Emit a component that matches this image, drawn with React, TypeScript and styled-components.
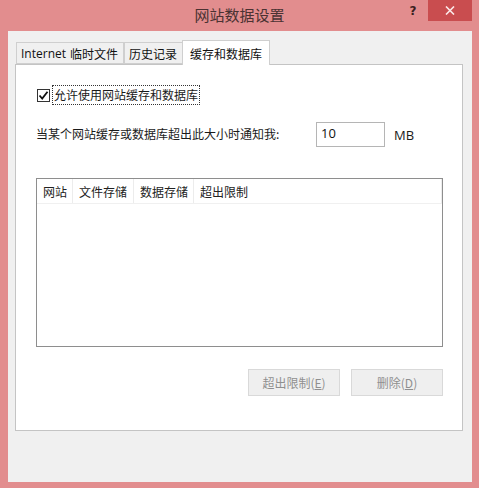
import React, { useState } from 'react';
import styled, { createGlobalStyle } from 'styled-components';

const GlobalStyle = createGlobalStyle`
  html, body {
    margin: 0;
    padding: 0;
    background: #e28d8e;
  }
  body {
    font-family: 'Noto Sans CJK SC', 'Liberation Sans', sans-serif;
    font-size: 12px;
    color: #1a1a1a;
  }
`;

const Window = styled.div`
  width: 479px;
  height: 488px;
  background: #e28d8e;
  display: flex;
  flex-direction: column;
  box-sizing: border-box;
  padding-bottom: 6px;
`;

const TitleBar = styled.div`
  height: 31px;
  display: grid;
  grid-template-columns: 1fr auto 1fr;
  align-items: start;
  flex-shrink: 0;
`;

const Caption = styled.div`
  grid-column: 2;
  font-size: 15px;
  line-height: 30px;
  color: #4a3232;
`;

const Controls = styled.div`
  grid-column: 3;
  justify-self: end;
  display: flex;
  align-items: center;
  margin-right: 7px;
`;

const HelpButton = styled.div`
  width: 22px;
  height: 20px;
  font-family: 'DejaVu Sans', sans-serif;
  font-weight: bold;
  font-size: 12px;
  color: #3a2020;
  display: flex;
  align-items: center;
  justify-content: center;
  margin-right: 4px;
`;

const CloseButton = styled.div`
  width: 44px;
  height: 21px;
  background: #c94d4f;
  display: flex;
  align-items: center;
  justify-content: center;
`;

const Client = styled.div`
  flex: 1;
  margin: 0 7px 0 8px;
  background: #f0f0f0;
  padding: 9px 9px 0 7px;
  display: flex;
  flex-direction: column;
`;

const TabStrip = styled.div`
  display: flex;
  align-items: flex-end;
  height: 24px;
  padding-left: 1px;
  position: relative;
  z-index: 1;
`;

const Tab = styled.div<{ $active?: boolean }>`
  height: ${p => (p.$active ? 25 : 22)}px;
  margin-bottom: ${p => (p.$active ? -1 : 0)}px;
  box-sizing: border-box;
  padding: 0 ${p => (p.$active ? 7 : 5)}px 0 ${p => (p.$active ? 7 : 4)}px;
  background: ${p => (p.$active ? '#ffffff' : '#f0f0f0')};
  border: 1px solid #cfcfcf;
  border-bottom: ${p => (p.$active ? 'none' : '1px solid #cfcfcf')};
  margin-left: ${p => (p.$active ? -1 : 0)}px;
  display: flex;
  align-items: center;
  font-size: 12px;
  white-space: nowrap;
  color: #111;
  & + & {
    border-left: ${p => (p.$active ? '1px solid #cfcfcf' : 'none')};
  }
`;

const Latin = styled.span`
  font-family: 'Open Sans', 'Liberation Sans', sans-serif;
  margin-right: 4px;
`;

const Panel = styled.div`
  width: 448px;
  height: 367px;
  box-sizing: border-box;
  background: #ffffff;
  border: 1px solid #c4c4c4;
  padding: 20px 19px 0 20px;
  display: flex;
  flex-direction: column;
`;

const CheckRow = styled.label`
  display: flex;
  align-items: center;
  gap: 2px;
  height: 20px;
`;

const CheckBox = styled.span`
  width: 13px;
  height: 13px;
  box-sizing: border-box;
  border: 1px solid #333;
  background: #fff;
  display: flex;
  align-items: center;
  justify-content: center;
  margin-left: 1px;
`;

const FocusLabel = styled.span`
  border: 1px dotted #333;
  padding: 0 1px;
  line-height: 18px;
`;

const LimitRow = styled.div`
  display: flex;
  align-items: center;
  margin-top: 17px;
  height: 25px;
`;

const LimitText = styled.span`
  width: 280px;
  margin-top: -3px;
`;

const SizeInput = styled.input`
  width: 69px;
  height: 25px;
  box-sizing: border-box;
  border: 1px solid #b5b5b5;
  font-family: 'Open Sans', 'Liberation Sans', sans-serif;
  font-size: 13px;
  padding: 0 4px 3px;
  color: #111;
  outline: none;
`;

const Unit = styled.span`
  font-family: 'Open Sans', 'Liberation Sans', sans-serif;
  font-size: 13px;
  margin-left: 9px;
`;

const ListBox = styled.div`
  margin-top: 31px;
  width: 407px;
  height: 169px;
  box-sizing: border-box;
  border: 1px solid #8e8e8e;
  background: #fff;
`;

const HeaderRow = styled.div`
  display: flex;
  height: 24px;
  border-bottom: 1px solid #f0f0f0;
`;

const HeaderCell = styled.div<{ $w: number }>`
  width: ${p => p.$w}px;
  box-sizing: border-box;
  padding-left: 6px;
  border-right: 1px solid #ececec;
  display: flex;
  align-items: center;
  color: #222;
`;

const ButtonRow = styled.div`
  display: flex;
  justify-content: flex-end;
  gap: 11px;
  margin-top: 22px;
  width: 407px;
`;

const DisabledButton = styled.button`
  width: 92px;
  height: 27px;
  background: #efefef;
  border: 1px solid #d9d9d9;
  color: #8f8f8f;
  font-family: inherit;
  font-size: 12px;
  padding: 0;
  u {
    text-decoration: underline;
  }
`;

const columns = [
  { label: '网站', w: 36 },
  { label: '文件存储', w: 61 },
  { label: '数据存储', w: 60 },
  { label: '超出限制', w: 248 },
];

const App: React.FC = () => {
  const [limit, setLimit] = useState('10');

  return (
    <>
      <GlobalStyle />
      <Window>
        <TitleBar>
          <Caption>网站数据设置</Caption>
          <Controls>
            <HelpButton>?</HelpButton>
            <CloseButton>
              <svg width="10" height="9" viewBox="0 0 10 9">
                <path d="M1 0.5 L9 8.5 M9 0.5 L1 8.5" stroke="#fbeaea" strokeWidth="1.6" />
              </svg>
            </CloseButton>
          </Controls>
        </TitleBar>
        <Client>
          <TabStrip>
            <Tab><Latin>Internet</Latin>临时文件</Tab>
            <Tab>历史记录</Tab>
            <Tab $active>缓存和数据库</Tab>
          </TabStrip>
          <Panel>
            <CheckRow>
              <CheckBox>
                <svg width="11" height="11" viewBox="0 0 11 11">
                  <path d="M1.5 5.5 L4.2 8.5 L9.5 1.8" fill="none" stroke="#111" strokeWidth="1.8" />
                </svg>
              </CheckBox>
              <FocusLabel>允许使用网站缓存和数据库</FocusLabel>
            </CheckRow>
            <LimitRow>
              <LimitText>当某个网站缓存或数据库超出此大小时通知我:</LimitText>
              <SizeInput value={limit} onChange={e => setLimit(e.target.value)} />
              <Unit>MB</Unit>
            </LimitRow>
            <ListBox>
              <HeaderRow>
                {columns.map(c => (
                  <HeaderCell key={c.label} $w={c.w}>{c.label}</HeaderCell>
                ))}
              </HeaderRow>
            </ListBox>
            <ButtonRow>
              <DisabledButton disabled>超出限制(<u>E</u>)</DisabledButton>
              <DisabledButton disabled>删除(<u>D</u>)</DisabledButton>
            </ButtonRow>
          </Panel>
        </Client>
      </Window>
    </>
  );
};

export default App;
